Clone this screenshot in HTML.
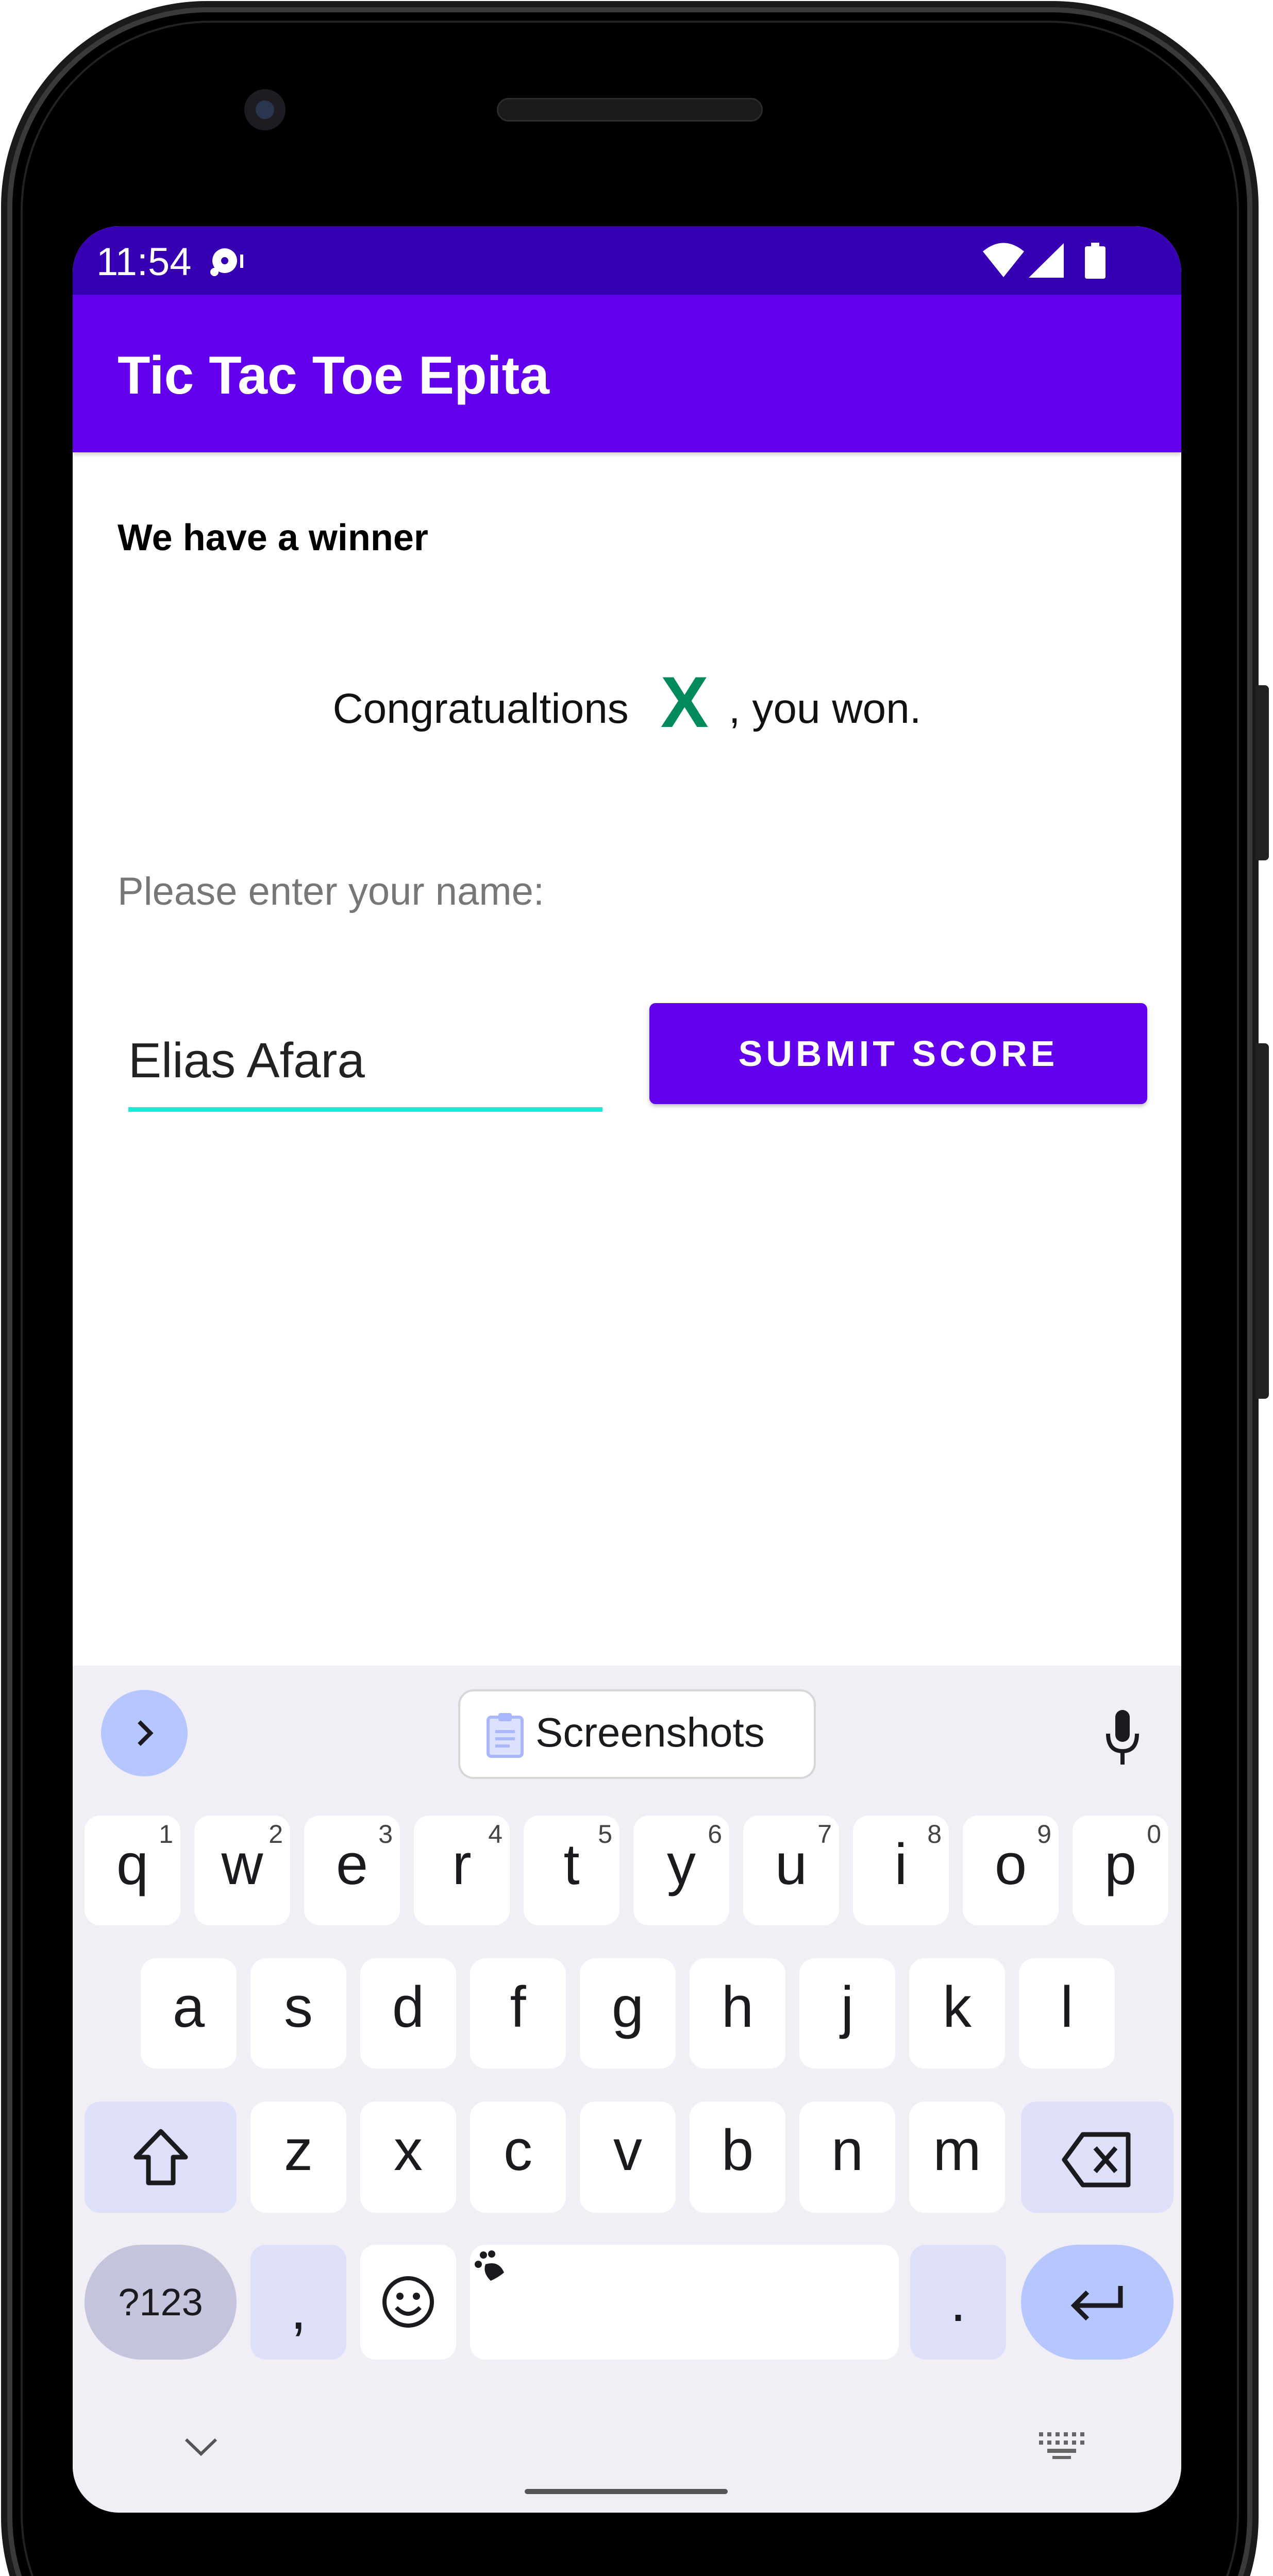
<!DOCTYPE html>
<html><head><meta charset="utf-8"><style>
*{margin:0;padding:0;box-sizing:border-box}
body{width:2470px;height:5292px;background:#fff;position:relative;overflow:hidden;font-family:"Liberation Sans",sans-serif}
.abs{position:absolute}
.key{position:absolute;background:#fff;border-radius:30px;height:213px;width:186px;text-align:center;font-size:112px;color:#1b1b1f;line-height:190px}
.sup{position:absolute;right:14px;top:6px;font-size:50px;line-height:60px;color:#444}
</style></head><body>
<!-- phone body -->
<div class="abs" style="left:2px;top:2px;width:2440px;height:5284px;border-radius:400px;background:#1a1a1a;"></div>
<div class="abs" style="left:14px;top:14px;width:2416px;height:5260px;border-radius:390px;background:#000;border:10px solid #3a3a3a;"></div>
<div class="abs" style="left:40px;top:40px;width:2364px;height:5208px;border-radius:370px;background:#000;border:4px solid #222;"></div>
<!-- side buttons -->
<div class="abs" style="left:2436px;top:1330px;width:26px;height:340px;background:#222;border-radius:0 8px 8px 0"></div>
<div class="abs" style="left:2436px;top:2025px;width:26px;height:690px;background:#222;border-radius:0 8px 8px 0"></div>
<!-- camera & speaker -->
<div class="abs" style="left:474px;top:173px;width:80px;height:80px;border-radius:50%;background:#1c1c22;"></div>
<div class="abs" style="left:496px;top:195px;width:36px;height:36px;border-radius:50%;background:#2a3550;"></div>
<div class="abs" style="left:964px;top:190px;width:516px;height:46px;border-radius:23px;background:#1a1a1a;border:3px solid #2c2c2c"></div>
<!-- screen -->
<div class="abs" style="left:141px;top:439px;width:2151px;height:4438px;border-radius:90px;background:#fff;overflow:hidden">
 <div class="abs" style="left:0;top:0;width:2151px;height:133px;background:#3700B3"></div>
 <div class="abs" style="left:46px;top:20px;font-size:76px;color:#fff;line-height:100px">11:54</div>
 <svg class="abs" style="left:265px;top:35px" width="70" height="70" viewBox="0 0 70 70"><circle cx="30" cy="32" r="24" fill="#fff"/><circle cx="30" cy="32" r="7" fill="#3700B3"/><circle cx="10" cy="54" r="8" fill="#fff"/><rect x="60" y="20" width="6" height="26" fill="#fff"/></svg>
 <svg class="abs" style="left:1766px;top:32px" width="80" height="67" viewBox="0 0 80 67"><path d="M0 17 Q40 -16 80 17 L40 67 Z" fill="#fff"/></svg>
 <svg class="abs" style="left:1855px;top:33px" width="68" height="67"><path d="M68 0 L68 67 L0 67 Z" fill="#fff"/></svg>
 <svg class="abs" style="left:1964px;top:32px" width="40" height="70"><rect x="12" y="0" width="16" height="8" fill="#fff"/><rect x="0" y="7" width="40" height="63" rx="4" fill="#fff"/></svg>
 <div class="abs" style="left:0;top:133px;width:2151px;height:306px;background:#6200EE;box-shadow:0 4px 8px rgba(0,0,0,.2)"></div>
 <div class="abs" style="left:87px;top:230px;font-size:104px;font-weight:bold;color:#fff;line-height:120px">Tic Tac Toe Epita</div>
 <div class="abs" style="left:87px;top:562px;font-size:72px;font-weight:bold;color:#000;line-height:86px">We have a winner</div>
 <div class="abs" style="left:0;top:824px;width:2151px;text-align:center;line-height:200px;white-space:nowrap;color:#111;font-size:82px"><span>Congratualtions</span> <span style="color:#008a5e;font-weight:bold;font-size:140px;vertical-align:-8px">&nbsp;X&nbsp;</span><span>, you won.</span></div>
 <div class="abs" style="left:87px;top:1250px;font-size:76px;color:#777;line-height:84px">Please enter your name:</div>
 <div class="abs" style="left:108px;top:1563px;font-size:96px;color:#222;line-height:114px">Elias Afara</div>
 <div class="abs" style="left:108px;top:1710px;width:920px;height:9px;background:#10f0d8"></div>
 <div class="abs" style="left:1119px;top:1508px;width:966px;height:196px;background:#6200EE;border-radius:12px;box-shadow:0 4px 8px rgba(0,0,0,.25);color:#fff;font-size:70px;font-weight:bold;letter-spacing:7px;text-align:center;line-height:196px">SUBMIT SCORE</div>
 <!-- keyboard -->
 <div class="abs" style="left:0;top:2794px;width:2151px;height:1644px;background:#f1eff5">
  <div class="abs" style="left:55px;top:47px;width:168px;height:168px;border-radius:50%;background:#b6c6ff"></div>
  <svg class="abs" style="left:105px;top:97px" width="68" height="68" viewBox="0 0 68 68"><path d="M24 12 L46 34 L24 56" fill="none" stroke="#1b1b1f" stroke-width="8"/></svg>
  <div class="abs" style="left:748px;top:46px;width:694px;height:174px;border-radius:30px;background:#fff;border:4px solid #d6d6d6"></div>
  <svg class="abs" style="left:800px;top:90px" width="80" height="90" viewBox="0 0 80 90"><rect x="6" y="10" width="66" height="76" rx="6" fill="#dbe1ff" stroke="#a9b7ff" stroke-width="6"/><rect x="26" y="2" width="26" height="16" rx="4" fill="#a9b7ff"/><path d="M20 38H58M20 52H58M20 66H48" stroke="#a9b7ff" stroke-width="6"/></svg>
  <div class="abs" style="left:898px;top:80px;font-size:80px;color:#1b1b1f;line-height:100px">Screenshots</div>
  <svg class="abs" style="left:2001px;top:82px" width="72" height="112" viewBox="0 0 72 112"><rect x="22" y="4" width="28" height="62" rx="14" fill="#1b1b1f"/><path d="M8 50 Q8 84 36 84 Q64 84 64 50" fill="none" stroke="#1b1b1f" stroke-width="8"/><rect x="32" y="84" width="8" height="26" fill="#1b1b1f"/></svg>
 </div>
 <div class="key" style="left:23px;top:3085px">q<span class="sup">1</span></div>
 <div class="key" style="left:236px;top:3085px">w<span class="sup">2</span></div>
 <div class="key" style="left:449px;top:3085px">e<span class="sup">3</span></div>
 <div class="key" style="left:662px;top:3085px">r<span class="sup">4</span></div>
 <div class="key" style="left:875px;top:3085px">t<span class="sup">5</span></div>
 <div class="key" style="left:1088px;top:3085px">y<span class="sup">6</span></div>
 <div class="key" style="left:1301px;top:3085px">u<span class="sup">7</span></div>
 <div class="key" style="left:1514px;top:3085px">i<span class="sup">8</span></div>
 <div class="key" style="left:1727px;top:3085px">o<span class="sup">9</span></div>
 <div class="key" style="left:1940px;top:3085px">p<span class="sup">0</span></div>
 <div class="key" style="left:132px;top:3362px;height:214px">a</div>
 <div class="key" style="left:345px;top:3362px;height:214px">s</div>
 <div class="key" style="left:558px;top:3362px;height:214px">d</div>
 <div class="key" style="left:771px;top:3362px;height:214px">f</div>
 <div class="key" style="left:984px;top:3362px;height:214px">g</div>
 <div class="key" style="left:1197px;top:3362px;height:214px">h</div>
 <div class="key" style="left:1410px;top:3362px;height:214px">j</div>
 <div class="key" style="left:1623px;top:3362px;height:214px">k</div>
 <div class="key" style="left:1836px;top:3362px;height:214px">l</div>
 <div class="key" style="left:23px;top:3640px;width:295px;height:216px;background:#dde0f8"><svg style="margin-top:50px" width="120" height="120" viewBox="0 0 120 120"><path d="M60 8 L108 58 L84 58 L84 108 L36 108 L36 58 L12 58 Z" fill="none" stroke="#1b1b1f" stroke-width="9" stroke-linejoin="round"/></svg></div>
 <div class="key" style="left:345px;top:3640px;height:216px">z</div>
 <div class="key" style="left:558px;top:3640px;height:216px">x</div>
 <div class="key" style="left:771px;top:3640px;height:216px">c</div>
 <div class="key" style="left:984px;top:3640px;height:216px">v</div>
 <div class="key" style="left:1197px;top:3640px;height:216px">b</div>
 <div class="key" style="left:1410px;top:3640px;height:216px">n</div>
 <div class="key" style="left:1623px;top:3640px;height:216px">m</div>
 <div class="key" style="left:1840px;top:3640px;width:296px;height:216px;background:#dde0f8"><svg style="margin-top:58px" width="140" height="110" viewBox="0 0 140 110"><path d="M42 6 H130 V104 H42 L6 55 Z" fill="none" stroke="#1b1b1f" stroke-width="9" stroke-linejoin="round"/><path d="M66 32 L106 78 M106 32 L66 78" stroke="#1b1b1f" stroke-width="9"/></svg></div>
 <div class="key" style="left:23px;top:3918px;width:295px;height:223px;border-radius:112px;background:#c4c4dc;font-size:74px;line-height:223px">?123</div>
 <div class="key" style="left:345px;top:3918px;height:223px;background:#dde0f8;line-height:250px">,</div>
 <div class="key" style="left:558px;top:3918px;height:223px"><svg style="margin-top:58px" width="106" height="106" viewBox="0 0 106 106"><circle cx="53" cy="53" r="46" fill="none" stroke="#1b1b1f" stroke-width="8"/><circle cx="37" cy="42" r="7" fill="#1b1b1f"/><circle cx="69" cy="42" r="7" fill="#1b1b1f"/><path d="M30 64 Q53 88 76 64" fill="none" stroke="#1b1b1f" stroke-width="8"/></svg></div>
 <div class="key" style="left:771px;top:3918px;width:832px;height:223px"><svg class="abs" style="left:6px;top:8px" width="80" height="80" viewBox="0 0 80 80"><circle cx="20" cy="12" r="7" fill="#1b1b1f"/><circle cx="36" cy="10" r="7" fill="#1b1b1f"/><circle cx="10" cy="30" r="7" fill="#1b1b1f"/><path d="M24 30 Q50 22 60 46 Q48 56 34 62 Q18 46 24 30Z" fill="#1b1b1f"/></svg></div>
 <div class="key" style="left:1625px;top:3918px;height:223px;background:#dde0f8;line-height:220px">.</div>
 <div class="key" style="left:1840px;top:3918px;width:296px;height:223px;border-radius:112px;background:#b6c6ff"><svg style="margin-top:74px" width="110" height="80" viewBox="0 0 110 80"><path d="M100 6 V44 H12 M36 18 L10 44 L36 70" fill="none" stroke="#1b1b1f" stroke-width="9"/></svg></div>
 <svg class="abs" style="left:214px;top:4288px" width="70" height="44" viewBox="0 0 70 44"><path d="M6 8 L35 36 L64 8" fill="none" stroke="#555" stroke-width="6"/></svg>
 <svg class="abs" style="left:1873px;top:4280px" width="92" height="56" viewBox="0 0 92 56"><g fill="#666"><rect x="2" y="2" width="8" height="8"/><rect x="18" y="2" width="8" height="8"/><rect x="34" y="2" width="8" height="8"/><rect x="50" y="2" width="8" height="8"/><rect x="66" y="2" width="8" height="8"/><rect x="82" y="2" width="8" height="8"/><rect x="2" y="18" width="8" height="8"/><rect x="18" y="18" width="8" height="8"/><rect x="34" y="18" width="8" height="8"/><rect x="50" y="18" width="8" height="8"/><rect x="66" y="18" width="8" height="8"/><rect x="82" y="18" width="8" height="8"/><rect x="18" y="34" width="56" height="8"/><rect x="28" y="48" width="36" height="6"/></g></svg>
 <div class="abs" style="left:877px;top:4392px;width:394px;height:10px;border-radius:5px;background:#555"></div>
</div>
</body></html>
